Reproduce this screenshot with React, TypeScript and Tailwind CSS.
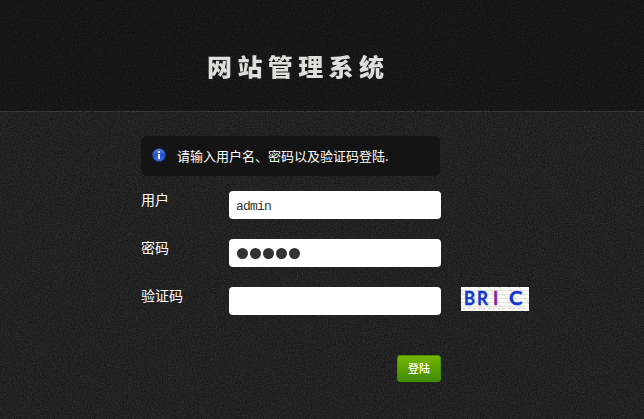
import React, { useState } from 'react';

const captchaLines = [4, 8, 12, 16, 20];
const captchaSlants = [-12, -2, 8, 18, 28, 38, 48, 58];

function Noise() {
  return (
    <svg className="pointer-events-none absolute inset-0 h-full w-full" aria-hidden="true">
      <filter id="grain" x="0" y="0" width="100%" height="100%" colorInterpolationFilters="sRGB">
        <feTurbulence type="fractalNoise" baseFrequency="0.77" numOctaves="2" seed="4" />
        <feColorMatrix values="0 0 0 0 0  0 0 0 0 0  0 0 0 0 0  0.9 0 0 0 -0.22" />
      </filter>
      <rect width="100%" height="100%" filter="url(#grain)" />
    </svg>
  );
}

function InfoIcon() {
  return (
    <svg width="14" height="14" viewBox="0 0 14 14" className="relative -top-px">
      <defs>
        <linearGradient id="info" x1="0" y1="0" x2="0" y2="1">
          <stop offset="0" stopColor="#5f87ea" />
          <stop offset="0.5" stopColor="#2450cf" />
          <stop offset="1" stopColor="#3d72ee" />
        </linearGradient>
      </defs>
      <circle cx="7" cy="7" r="6.3" fill="url(#info)" stroke="#2347b5" strokeWidth="0.8" />
      <rect x="6" y="3" width="2" height="2" fill="#fff" />
      <path d="M6 6h2v5H6z" fill="#fff" />
    </svg>
  );
}

function Captcha() {
  return (
    <svg width="68" height="24" viewBox="0 0 68 24" className="ml-5 bg-[#fbfbf8]">
      {captchaLines.map((y) => (
        <path key={y} d={`M0 ${y - 0.5}H68`} stroke="#dcdee0" strokeWidth="0.8" />
      ))}
      {captchaSlants.map((x) => (
        <path key={x} d={`M${x} 0l14 24`} stroke="#bfcf9b" strokeWidth="0.7" strokeDasharray="2 1" />
      ))}
      <path d="M2 21.5H66" stroke="#d9a9bd" strokeWidth="0.8" strokeDasharray="2 3" />
      <g fontFamily="Lato, sans-serif" fontWeight="700" fontSize="18" fill="#1238cd" stroke="#1238cd" strokeWidth="0.4">
        <text x="3" y="18" textLength="11" lengthAdjust="spacingAndGlyphs">B</text>
        <text x="16" y="18" textLength="11" lengthAdjust="spacingAndGlyphs">R</text>
        <text x="32" y="18" fill="#8a1fa3" stroke="#8a1fa3">I</text>
        <text x="48" y="18" textLength="13.5" lengthAdjust="spacingAndGlyphs">C</text>
      </g>
    </svg>
  );
}

function Row({ label, children }: { label: string; children: React.ReactNode }) {
  return (
    <div className="flex h-7 items-start">
      <label className="w-[88px] shrink-0 text-sm leading-4">{label}</label>
      {children}
    </div>
  );
}

export default function App() {
  const [user, setUser] = useState('admin');
  const [code, setCode] = useState('');

  return (
    <div className="relative isolate h-[419px] w-[644px] overflow-hidden bg-[#2c2c2c] font-['Noto_Sans_CJK_SC',sans-serif] text-white">
      <Noise />
      <header className="h-28 border-b border-[#464646] bg-[#1e1e1e] pl-[207px] pt-12">
        <h1 className="relative z-10 scale-y-95 text-[25px] leading-9 font-black tracking-[5.4px] text-[#dededc]">网站管理系统</h1>
      </header>

      <main className="relative ml-[141px] pt-6">
        <div className="flex h-10 w-[299px] items-center rounded-md bg-[#141414] pl-[11px]">
          <InfoIcon />
          <p className="ml-[11px] text-[13px] leading-5">请输入用户名、密码以及验证码登陆.</p>
        </div>

        <form className="mt-[15px] flex flex-col gap-5" onSubmit={(e) => e.preventDefault()}>
          <Row label="用户">
            <input
              value={user}
              onChange={(e) => setUser(e.target.value)}
              className="h-7 w-[212px] rounded bg-white px-[7px] pt-0.5 font-['Liberation_Mono',monospace] text-[13px] tracking-[-0.8px] text-[#333] outline-none"
            />
          </Row>
          <Row label="密码">
            <div className="flex h-7 w-[212px] items-center gap-0.5 rounded bg-white px-2 pt-px">
              {[0, 1, 2, 3, 4].map((i) => (
                <span key={i} className="size-[11px] rounded-full bg-[#333]" />
              ))}
            </div>
          </Row>
          <Row label="验证码">
            <input
              value={code}
              onChange={(e) => setCode(e.target.value)}
              className="h-7 w-[212px] rounded bg-white px-[7px] text-xs text-[#333] outline-none"
            />
            <Captcha />
          </Row>
          <button className="mt-5 ml-64 flex h-[27px] w-11 items-center justify-center rounded-[3px] border border-[#459300] bg-linear-to-b from-[#76b500] to-[#3f8c04] text-[11px] font-medium">
            登陆
          </button>
        </form>
      </main>
    </div>
  );
}
